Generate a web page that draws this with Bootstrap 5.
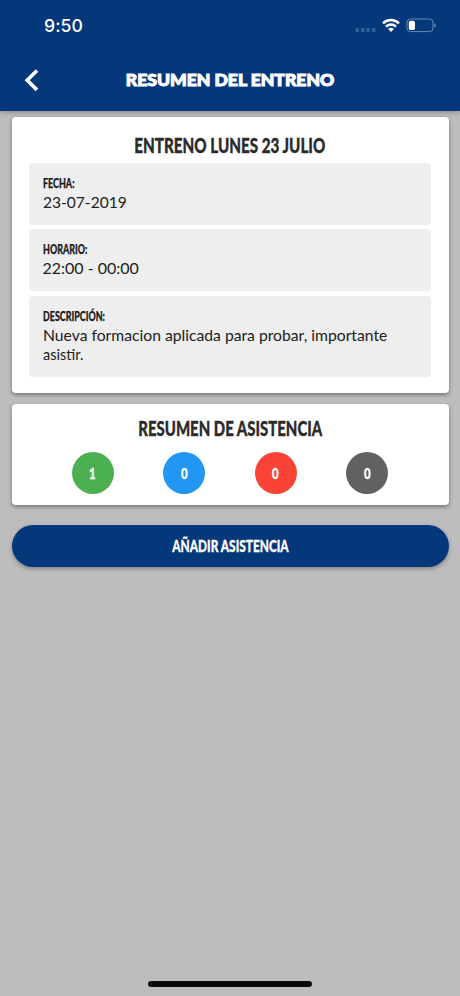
<!DOCTYPE html>
<html lang="es">
<head>
<meta charset="utf-8">
<meta name="viewport" content="width=device-width, initial-scale=1">
<title>Resumen del entreno</title>
<link href="https://cdn.jsdelivr.net/npm/bootstrap@5.3.0/dist/css/bootstrap.min.css" rel="stylesheet">
<style>
  body { background: #bdbdbd; font-family: Lato, sans-serif; color: #212121; height: 996px; overflow: hidden; }
  .app-header { background: #05387b; height: 111px; box-shadow: 0 1px 5px rgba(0,0,0,.3); }
  .status { height: 50px; padding: 1px 24px 0 44px; }
  .clock { font: 500 17.6px/1 Inter, sans-serif; letter-spacing: .1px; }
  .titlebar { height: 60px; padding: 0 24px; }
  .side { width: 16px; }
  .page-title { font-size: 16.5px; font-weight: 900; -webkit-text-stroke: 1px #fff; line-height: 1; }
  .squeeze { display: inline-block; white-space: nowrap; transform-origin: center; }
  .squeeze-start { transform-origin: left; }
  .t-page { transform: scaleX(1.063); }
  .t-train { transform: scaleX(.741); }
  .t-sum { transform: scaleX(.729); }
  .t-add { transform: scaleX(.697); }
  .t-num { transform: scaleX(.76); }
  .t-label { transform: scaleX(.715); }
  .v-date { transform: scaleX(.972); }
  .v-desc { transform: scaleX(.981); }
  .v-tail { transform: scaleX(.91); }
  .main-pad { padding: 6px 11.5px 0; }
  .panel { border: 0; border-radius: 4px; box-shadow: 0 2px 4px rgba(0,0,0,.38); }
  .panel-info { height: 275.5px; padding: 16px 17.5px 0; }
  .panel-sum { height: 100.5px; margin-top: 11.5px; padding: 12px 35.5px 0; }
  .heading { font-size: 20.5px; line-height: 24px; font-weight: 900; color: #2b2b2b; -webkit-text-stroke: .35px #2b2b2b; }
  .fields { gap: 4.6px; margin-top: 5.7px; }
  .field { background: #eee; border-radius: 4px; padding: 13px 13.5px 0; height: 62px; }
  .field-tall { height: 81px; }
  .field-label { font-size: 12.5px; line-height: 16px; font-weight: 900; color: #1b1b1b; -webkit-text-stroke: .25px #1b1b1b; }
  .field-text { font-size: 16px; line-height: 19px; }
  .bubble { width: 42px; height: 42px; color: #fff; font-weight: 900; font-size: 15px; }
  .bubble, .action { -webkit-text-stroke: .3px #fff; }
  .green { background: #4caf50; } .blue { background: #2196f3; } .red { background: #f94336; } .gray { background: #616161; }
  .action, .action:hover { background: #05387b; color: #fff; }
  .action { height: 42px; margin-top: 20px; font-size: 17px; font-weight: 900; box-shadow: 0 2px 4px rgba(0,0,0,.3); }
  .home-bar { width: 164px; height: 6px; background: #0b0b0b; margin-bottom: 9px; }
</style>
<script src="https://cdn.jsdelivr.net/npm/bootstrap@5.3.0/dist/js/bootstrap.bundle.min.js"></script>
</head>
<body class="d-flex flex-column">
<header class="app-header text-white flex-shrink-0">
  <div class="status d-flex justify-content-between align-items-center">
    <span class="clock">9:50</span>
    <svg width="82" height="18" viewBox="354 17 82 18" aria-hidden="true">
      <g fill="#315e9c"><rect x="355.5" y="28" width="3.6" height="4" rx="1"/><rect x="361" y="28" width="3.6" height="4" rx="1"/><rect x="366.5" y="28" width="3.6" height="4" rx="1"/><rect x="372" y="28" width="3.6" height="4" rx="1"/></g>
      <g fill="none" stroke="#fff" stroke-width="2.5"><path d="M383 23.3a11.6 11.6 0 0 1 16 0"/><path d="M386 26.6a7.2 7.2 0 0 1 10 0"/></g>
      <path fill="#fff" d="M388.2 29a4.2 4.2 0 0 1 5.6 0L391 32z"/>
      <rect x="407" y="19" width="26" height="12.6" rx="3.5" fill="none" stroke="#698abb"/>
      <path fill="#698abb" d="M434.3 23.2q1.6.6 1.6 2.1t-1.6 2.1z"/>
      <rect x="408.8" y="20.8" width="6.2" height="9.2" rx="1.8" fill="#fff"/>
    </svg>
  </div>
  <div class="titlebar d-flex justify-content-between align-items-center">
    <svg width="16" height="24" viewBox="0 0 16 24" aria-label="Volver"><path d="M13 2.5 3.2 12.2 13 21.9" fill="none" stroke="#fff" stroke-width="3.6"/></svg>
    <h1 class="page-title mb-0"><span class="squeeze t-page">RESUMEN DEL ENTRENO</span></h1>
    <span class="side"></span>
  </div>
</header>
<main class="main-pad flex-grow-1">
  <section class="card panel panel-info">
    <h2 class="heading text-center mb-0"><span class="squeeze t-train">ENTRENO LUNES 23 JULIO</span></h2>
    <div class="fields d-grid">
      <div class="field"><div class="field-label"><span class="squeeze squeeze-start t-label">FECHA:</span></div><div class="field-text"><span class="squeeze squeeze-start v-date">23-07-2019</span></div></div>
      <div class="field"><div class="field-label"><span class="squeeze squeeze-start t-label">HORARIO:</span></div><div class="field-text"><span class="squeeze squeeze-start">22:00 - 00:00</span></div></div>
      <div class="field field-tall"><div class="field-label"><span class="squeeze squeeze-start t-label">DESCRIPCIÓN:</span></div><div class="field-text"><span class="squeeze squeeze-start v-desc">Nueva formacion aplicada para probar, importante</span> <span class="squeeze squeeze-start v-tail">asistir.</span></div></div>
    </div>
  </section>
  <section class="card panel panel-sum">
    <h2 class="heading text-center mb-0"><span class="squeeze t-sum">RESUMEN DE ASISTENCIA</span></h2>
    <div class="d-flex justify-content-around mt-2 pt-1">
      <span class="bubble green rounded-circle d-flex align-items-center justify-content-center"><span class="squeeze t-num">1</span></span>
      <span class="bubble blue rounded-circle d-flex align-items-center justify-content-center"><span class="squeeze t-num">0</span></span>
      <span class="bubble red rounded-circle d-flex align-items-center justify-content-center"><span class="squeeze t-num">0</span></span>
      <span class="bubble gray rounded-circle d-flex align-items-center justify-content-center"><span class="squeeze t-num">0</span></span>
    </div>
  </section>
  <button type="button" class="btn action w-100 rounded-pill border-0 p-0"><span class="squeeze t-add">AÑADIR ASISTENCIA</span></button>
</main>
<footer class="home-bar rounded-pill mx-auto flex-shrink-0"></footer>
</body>
</html>
